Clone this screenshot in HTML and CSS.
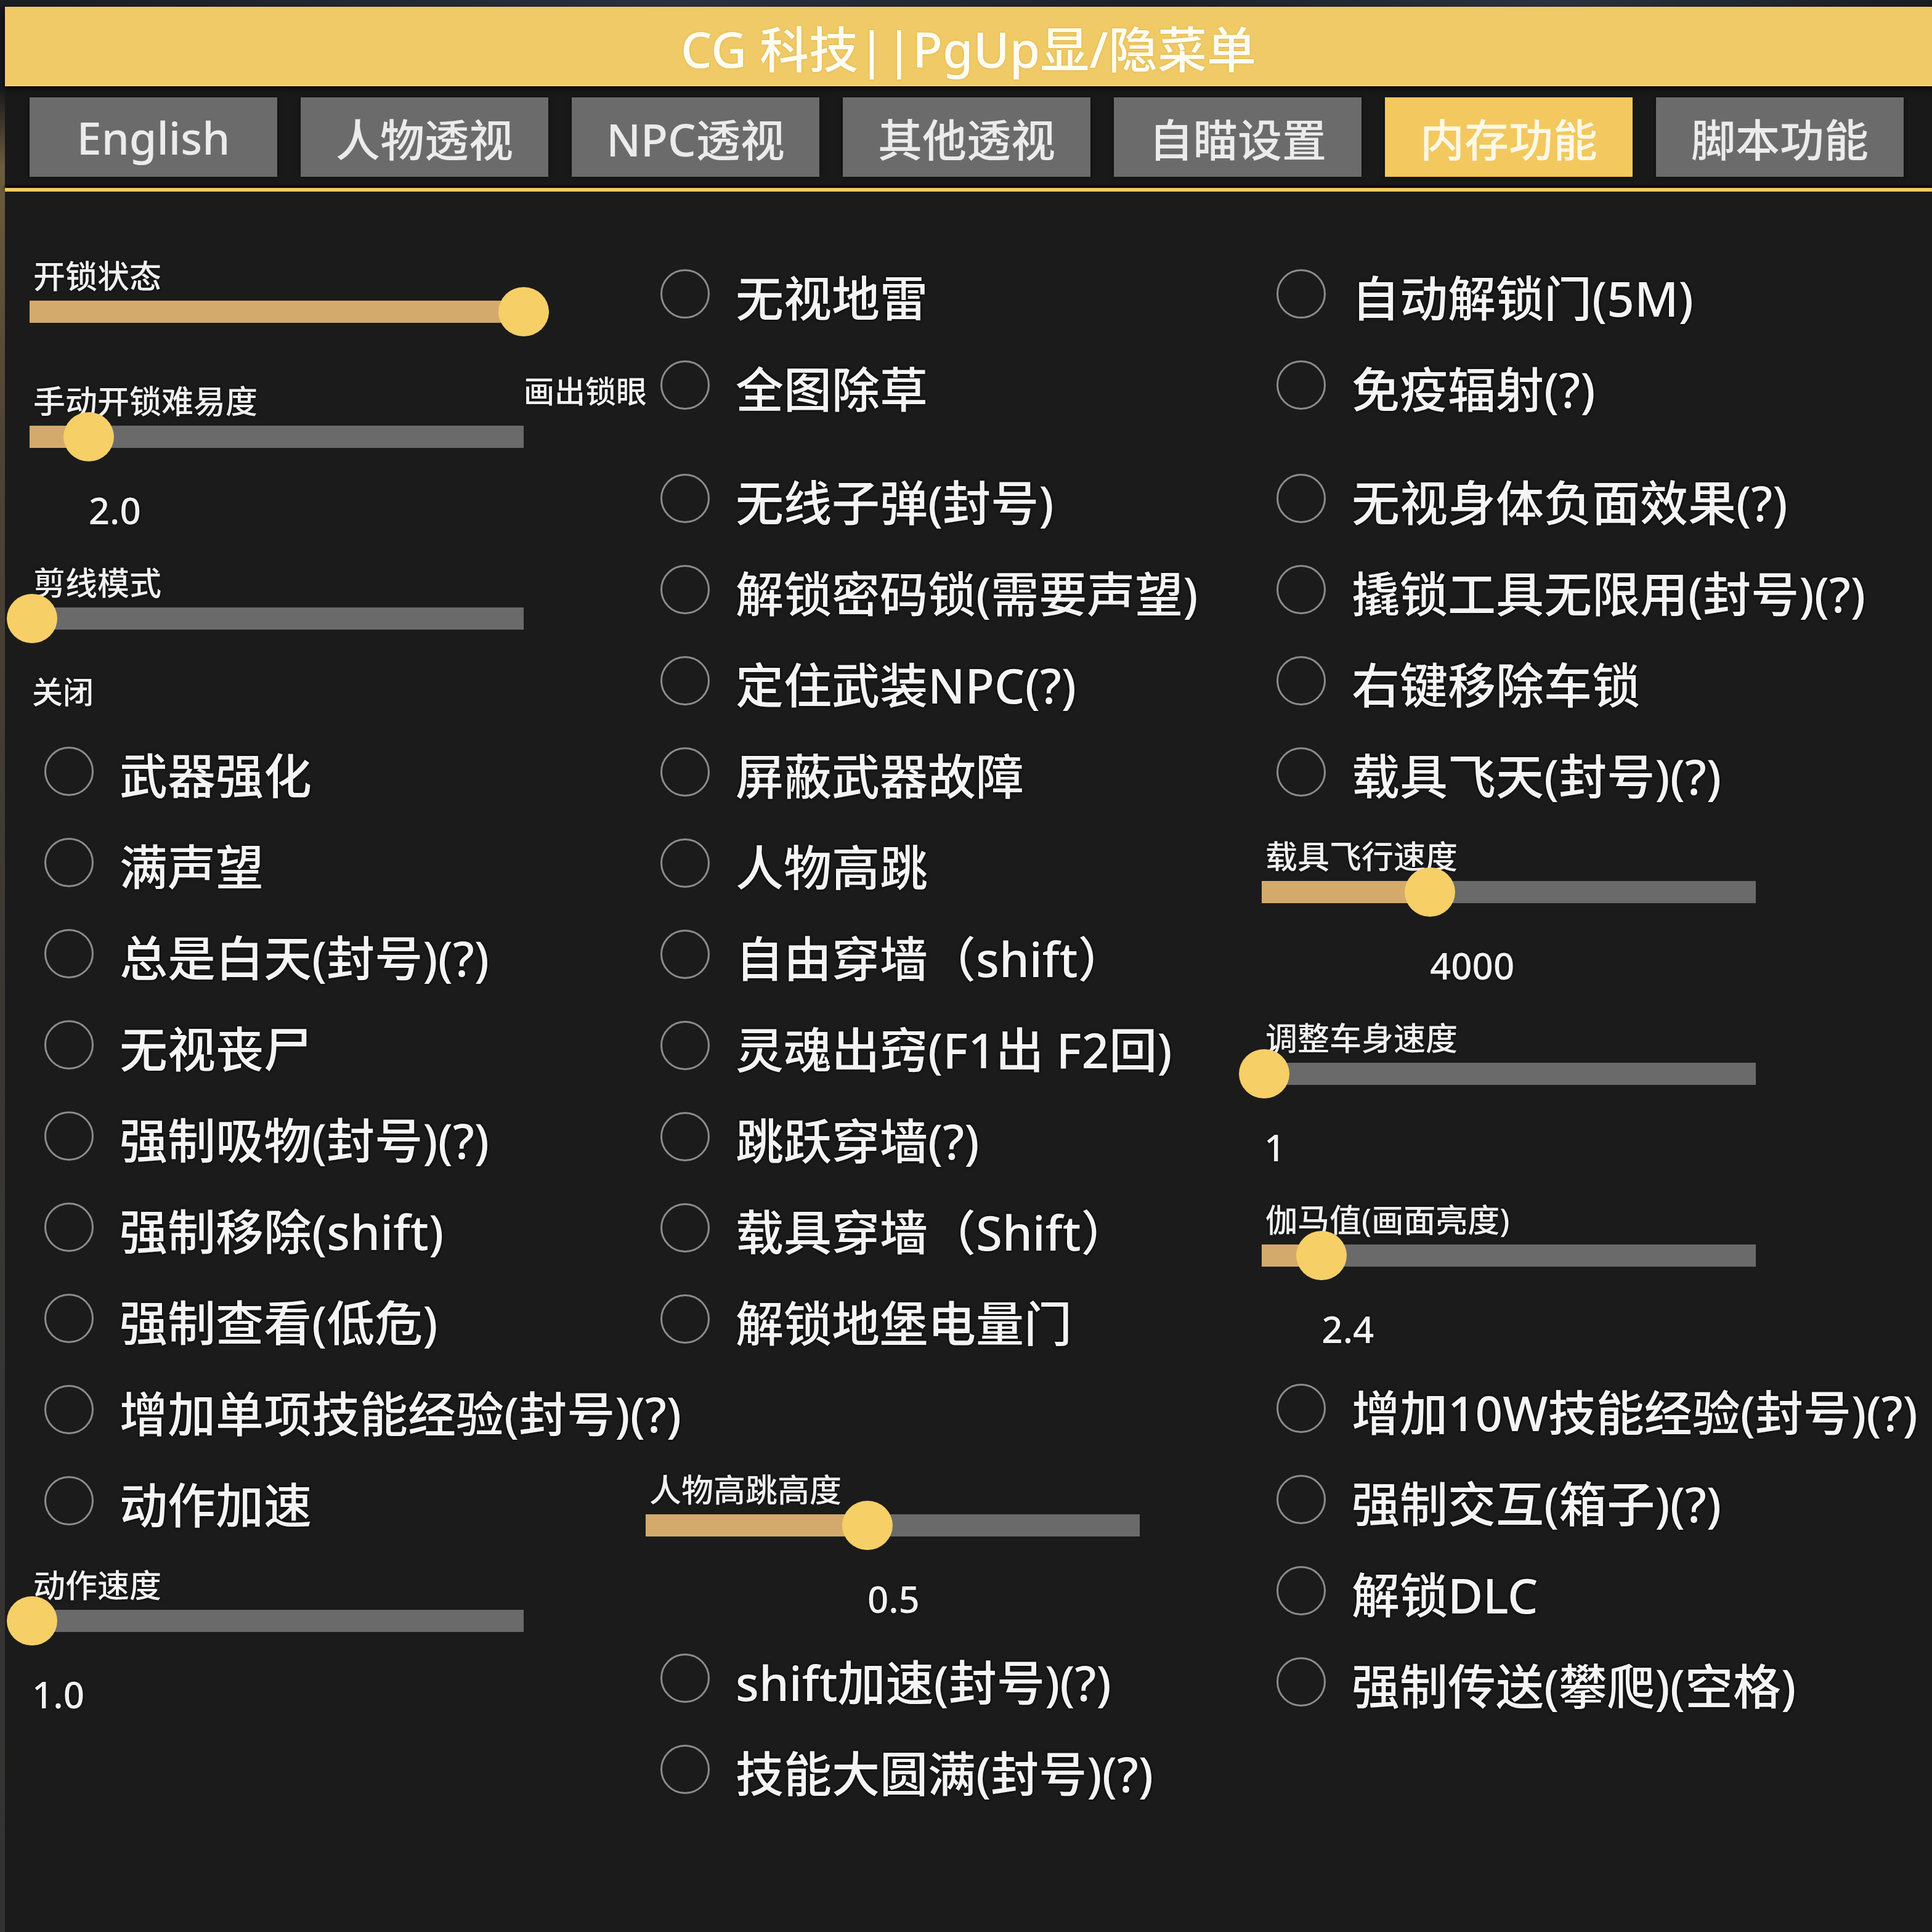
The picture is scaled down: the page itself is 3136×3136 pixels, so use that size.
FILE: index.html
```html
<!DOCTYPE html>
<html lang="zh-CN">
<head>
<meta charset="utf-8">
<title>CG 科技 菜单</title>
<link rel="stylesheet" href="styles.css">
</head>
<body>
<div class="topstrip"></div>
<div class="window">
  <header class="titlebar">CG 科技||PgUp显/隐菜单</header>
  <nav class="tabs">
    <div class="tab">English</div>
    <div class="tab">人物透视</div>
    <div class="tab">NPC透视</div>
    <div class="tab">其他透视</div>
    <div class="tab">自瞄设置</div>
    <div class="tab active">内存功能</div>
    <div class="tab">脚本功能</div>
  </nav>
  <div class="rule"></div>
  <main class="cols">
    <section class="col col1">
      <div class="slider compact" style="--p:1">
        <div class="s-label">开锁状态</div>
        <div class="track-wrap"><div class="track"><div class="fill"></div><div class="thumb"></div></div></div>
        <div class="value cjk">画出锁眼</div>
      </div>
      <div class="slider" style="--p:0.115">
        <div class="s-label">手动开锁难易度</div>
        <div class="track-wrap"><div class="track"><div class="fill"></div><div class="thumb"></div></div></div>
        <div class="value num">2.0</div>
      </div>
      <div class="slider" style="--p:0">
        <div class="s-label">剪线模式</div>
        <div class="track-wrap"><div class="track"><div class="fill"></div><div class="thumb"></div></div></div>
        <div class="value cjk">关闭</div>
      </div>
      <div class="radio"><span class="dot"></span><span class="r-label">武器强化</span></div>
      <div class="radio"><span class="dot"></span><span class="r-label">满声望</span></div>
      <div class="radio"><span class="dot"></span><span class="r-label">总是白天(封号)(?)</span></div>
      <div class="radio"><span class="dot"></span><span class="r-label">无视丧尸</span></div>
      <div class="radio"><span class="dot"></span><span class="r-label">强制吸物(封号)(?)</span></div>
      <div class="radio"><span class="dot"></span><span class="r-label">强制移除(shift)</span></div>
      <div class="radio"><span class="dot"></span><span class="r-label">强制查看(低危)</span></div>
      <div class="radio"><span class="dot"></span><span class="r-label">增加单项技能经验(封号)(?)</span></div>
      <div class="radio"><span class="dot"></span><span class="r-label">动作加速</span></div>
      <div class="slider" style="--p:0">
        <div class="s-label">动作速度</div>
        <div class="track-wrap"><div class="track"><div class="fill"></div><div class="thumb"></div></div></div>
        <div class="value num">1.0</div>
      </div>
    </section>

    <section class="col col2">
      <div class="radio"><span class="dot"></span><span class="r-label">无视地雷</span></div>
      <div class="radio"><span class="dot"></span><span class="r-label">全图除草</span></div>
      <div class="gap-sm"></div>
      <div class="radio"><span class="dot"></span><span class="r-label">无线子弹(封号)</span></div>
      <div class="radio"><span class="dot"></span><span class="r-label">解锁密码锁(需要声望)</span></div>
      <div class="radio"><span class="dot"></span><span class="r-label">定住武装NPC(?)</span></div>
      <div class="radio"><span class="dot"></span><span class="r-label">屏蔽武器故障</span></div>
      <div class="radio"><span class="dot"></span><span class="r-label">人物高跳</span></div>
      <div class="radio"><span class="dot"></span><span class="r-label">自由穿墙（shift）</span></div>
      <div class="radio"><span class="dot"></span><span class="r-label">灵魂出窍(F1出 F2回)</span></div>
      <div class="radio"><span class="dot"></span><span class="r-label">跳跃穿墙(?)</span></div>
      <div class="radio"><span class="dot"></span><span class="r-label">载具穿墙（Shift）</span></div>
      <div class="radio"><span class="dot"></span><span class="r-label">解锁地堡电量门</span></div>
      <div class="gap-row"></div>
      <div class="slider" style="--p:0.446">
        <div class="s-label">人物高跳高度</div>
        <div class="track-wrap"><div class="track"><div class="fill"></div><div class="thumb"></div></div></div>
        <div class="value num">0.5</div>
      </div>
      <div class="radio"><span class="dot"></span><span class="r-label">shift加速(封号)(?)</span></div>
      <div class="radio"><span class="dot"></span><span class="r-label">技能大圆满(封号)(?)</span></div>
    </section>

    <section class="col col3">
      <div class="radio"><span class="dot"></span><span class="r-label">自动解锁门(5M)</span></div>
      <div class="radio"><span class="dot"></span><span class="r-label">免疫辐射(?)</span></div>
      <div class="gap-sm"></div>
      <div class="radio"><span class="dot"></span><span class="r-label">无视身体负面效果(?)</span></div>
      <div class="radio"><span class="dot"></span><span class="r-label">撬锁工具无限用(封号)(?)</span></div>
      <div class="radio"><span class="dot"></span><span class="r-label">右键移除车锁</span></div>
      <div class="radio"><span class="dot"></span><span class="r-label">载具飞天(封号)(?)</span></div>
      <div class="slider" style="--p:0.337">
        <div class="s-label">载具飞行速度</div>
        <div class="track-wrap"><div class="track"><div class="fill"></div><div class="thumb"></div></div></div>
        <div class="value num">4000</div>
      </div>
      <div class="slider" style="--p:0">
        <div class="s-label">调整车身速度</div>
        <div class="track-wrap"><div class="track"><div class="fill"></div><div class="thumb"></div></div></div>
        <div class="value num">1</div>
      </div>
      <div class="slider" style="--p:0.117">
        <div class="s-label">伽马值(画面亮度)</div>
        <div class="track-wrap"><div class="track"><div class="fill"></div><div class="thumb"></div></div></div>
        <div class="value num">2.4</div>
      </div>
      <div class="radio"><span class="dot"></span><span class="r-label">增加10W技能经验(封号)(?)</span></div>
      <div class="radio"><span class="dot"></span><span class="r-label">强制交互(箱子)(?)</span></div>
      <div class="radio"><span class="dot"></span><span class="r-label">解锁DLC</span></div>
      <div class="radio"><span class="dot"></span><span class="r-label">强制传送(攀爬)(空格)</span></div>
    </section>
  </main>
</div>
</body>
</html>
```

FILE: styles.css
```css
html, body {
  margin: 0;
  padding: 0;
}
body {
  width: 3136px;
  height: 3136px;
  overflow: hidden;
  background: #1b1b1b;
  font-family: "Noto Sans", "Noto Sans CJK SC", sans-serif;
  color: #f2f2f2;
}
.topstrip {
  height: 11px;
  background: linear-gradient(to right, #1a1d22, #2a3140 35%, #1c2028 60%, #2b3340 80%, #1a1d22);
}
.window {
  border-left: 8px solid #4b4130;
  border-image: linear-gradient(to bottom, #16181c 0, #16181c 130px, #6c5c3c 260px, #4e4434 700px, #3a3733 1600px, #333333 3136px) 1;
  height: 3125px;
  background: #1b1b1b;
}
.titlebar {
  height: 129px;
  background: #efca66;
  color: #fffdf2;
  font-size: 80px;
  font-weight: 500;
  line-height: 136px;
  text-align: center;
  white-space: nowrap;
  box-sizing: border-box;
  border-bottom: 2px solid #f6d56e;
  box-shadow: 0 4px 8px rgba(0, 0, 0, 0.7);
  text-shadow: 0 0 3px rgba(200, 150, 40, 0.6);
  position: relative;
}
.tabs {
  display: flex;
  gap: 38px;
  padding: 18px 0 0 40px;
  height: 165px;
  box-sizing: border-box;
  background: #191919;
}
.tab {
  width: 402px;
  height: 129px;
  background: #6b6b6b;
  color: #ebebeb;
  font-size: 72px;
  font-weight: 500;
  display: flex;
  align-items: center;
  justify-content: center;
  white-space: nowrap;
  box-shadow: 0 0 6px rgba(0, 0, 0, 0.6);
}
.tab.active {
  background: #f3c85e;
  color: #fff8e6;
}
.rule {
  height: 6px;
  background: #f2cb5f;
  box-shadow: 0 -3px 4px rgba(0, 0, 0, 0.8);
}
.cols {
  display: grid;
  grid-template-columns: 1000px 1000px 1000px;
  padding: 81px 0 0 40px;
  align-items: start;
}
.col {
  display: flex;
  flex-direction: column;
}
.col2, .col3 {
  padding-top: 18px;
}
.gap-sm { height: 36px; }
.gap-row { height: 140px; }

/* radio rows */
.radio {
  height: 148px;
  display: flex;
  align-items: center;
  white-space: nowrap;
}
.dot {
  width: 80px;
  height: 80px;
  box-sizing: border-box;
  border: 3px solid #8c8c8c;
  border-radius: 50%;
  margin-left: 24px;
  margin-bottom: 14px;
  flex: none;
}
.r-label {
  margin-left: 42px;
  font-size: 78px;
  font-weight: 500;
  color: #f4f4f4;
  text-shadow: 0 0 5px #000, 0 0 2px #000;
  line-height: 1;
}

/* sliders */
.slider {
  padding-top: 28px;
  display: flex;
  flex-direction: column;
  align-items: flex-start;
}
.s-label {
  font-size: 52px;
  line-height: 56px;
  height: 56px;
  padding-left: 6px;
  font-weight: 500;
  white-space: nowrap;
  color: #f0f0f0;
  text-shadow: 0 0 4px #000;
}
.track-wrap {
  height: 60px;
  width: 802px;
  display: flex;
  align-items: center;
}
.track {
  position: relative;
  width: 802px;
  height: 36px;
  background: #6a6a6a;
}
.fill {
  height: 100%;
  width: calc(4px + var(--p) * 798px);
  background: #d4aa6c;
}
.thumb {
  position: absolute;
  top: 50%;
  left: calc(4px + var(--p) * 798px);
  width: 82px;
  height: 80px;
  border-radius: 50%;
  background: #f6cf66;
  transform: translate(-50%, -50%);
}
.value {
  padding-top: 60px;
  padding-bottom: 33px;
  line-height: 58px;
  height: 58px;
  margin-left: calc(4px + var(--p) * 798px);
  white-space: nowrap;
  color: #f2f2f2;
  text-shadow: 0 0 4px #000;
}
.value.num {
  font-size: 60px;
  font-weight: 500;
}
.value.cjk {
  font-size: 50px;
  font-weight: 500;
}
.slider.compact .value {
  padding-top: 70px;
  margin-bottom: -102px;
}
```
